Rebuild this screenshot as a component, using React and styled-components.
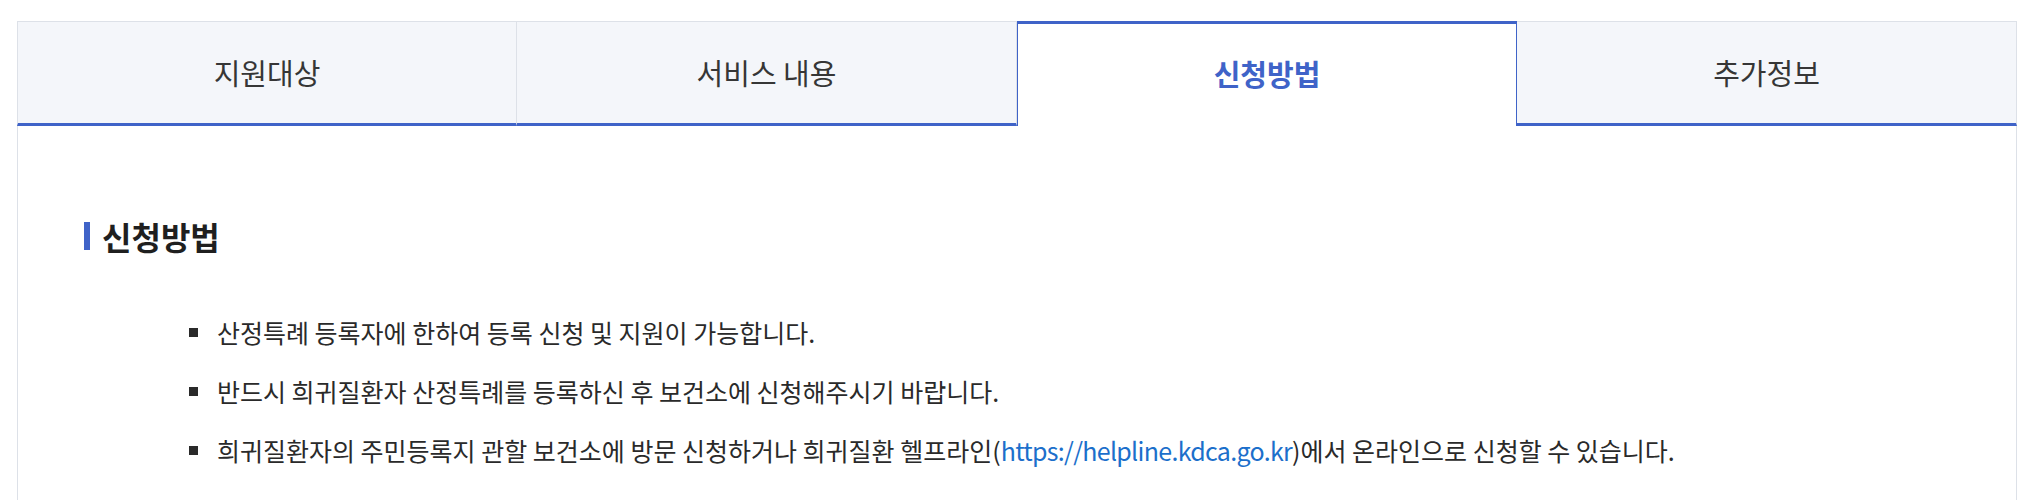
import React from 'react';
import styled, { createGlobalStyle } from 'styled-components';

const BLUE = '#3f63c8';
const LINE = '#dde1e8';

const tabs = ['지원대상', '서비스 내용', '신청방법', '추가정보'];
const activeIndex = 2;

const GlobalStyle = createGlobalStyle`
  * {
    box-sizing: border-box;
  }

  body {
    margin: 0;
    background: #fff;
    font-family: "Noto Sans CJK KR", "Noto Sans", sans-serif;
    color: #222;
  }
`;

const Wrapper = styled.div`
  width: 2000px;
  margin: 21px 0 0 17px;
`;

const TabList = styled.ul`
  display: grid;
  grid-template-columns: repeat(4, 500px);
  margin: 0;
  padding: 0;
  list-style: none;
`;

const Tab = styled.li`
  display: flex;
  align-items: center;
  justify-content: center;
  height: 105px;
  font-size: 29px;
  cursor: pointer;
  background: ${props => (props.active ? '#fff' : '#f4f6fa')};
  color: ${props => (props.active ? BLUE : '#363636')};
  font-weight: ${props => (props.active ? 700 : 400)};
  border-top: ${props => (props.active ? `3px solid ${BLUE}` : `1px solid ${LINE}`)};
  border-right: 1px solid ${props => (props.active ? BLUE : LINE)};
  border-left: ${props => (props.active ? `1px solid ${BLUE}` : props.first ? `1px solid ${LINE}` : 'none')};
  border-bottom: ${props => (props.active ? 'none' : `3px solid ${BLUE}`)};
  padding-bottom: ${props => (props.active ? '5px' : '2px')};
`;

const Panel = styled.section`
  border-left: 1px solid ${LINE};
  border-right: 1px solid ${LINE};
  padding: 88px 66px 60px 66px;
`;

const Heading = styled.h3`
  display: flex;
  align-items: center;
  margin: 0;
  font-size: 32px;
  line-height: 44px;
  font-weight: 700;
  color: #1f1f1f;

  &::before {
    content: '';
    width: 6px;
    height: 28px;
    margin-right: 12px;
    background: ${BLUE};
  }
`;

const List = styled.ul`
  display: flex;
  flex-direction: column;
  gap: 23px;
  margin: 56px 0 0;
  padding: 0 0 0 105px;
  list-style: none;
`;

const Item = styled.li`
  display: flex;
  align-items: center;
  font-size: 25px;
  line-height: 36px;
  color: #2a2a2a;

  &::before {
    content: '';
    flex: none;
    width: 9px;
    height: 9px;
    margin-right: 19px;
    background: #2a2a2a;
  }
`;

const Link = styled.a`
  color: #1c6fcb;
  text-decoration: none;
  letter-spacing: -0.7px;
`;

export default function App() {
  return (
    <Wrapper>
      <GlobalStyle />
      <TabList>
        {tabs.map((label, i) => (
          <Tab key={label} active={i === activeIndex} first={i === 0}>
            {label}
          </Tab>
        ))}
      </TabList>

      <Panel>
        <Heading>신청방법</Heading>
        <List>
          <Item>산정특례 등록자에 한하여 등록 신청 및 지원이 가능합니다.</Item>
          <Item>반드시 희귀질환자 산정특례를 등록하신 후 보건소에 신청해주시기 바랍니다.</Item>
          <Item>
            <span>
              희귀질환자의 주민등록지 관할 보건소에 방문 신청하거나 희귀질환 헬프라인(
              <Link href="#">https://helpline.kdca.go.kr</Link>
              )에서 온라인으로 신청할 수 있습니다.
            </span>
          </Item>
        </List>
      </Panel>
    </Wrapper>
  );
}
